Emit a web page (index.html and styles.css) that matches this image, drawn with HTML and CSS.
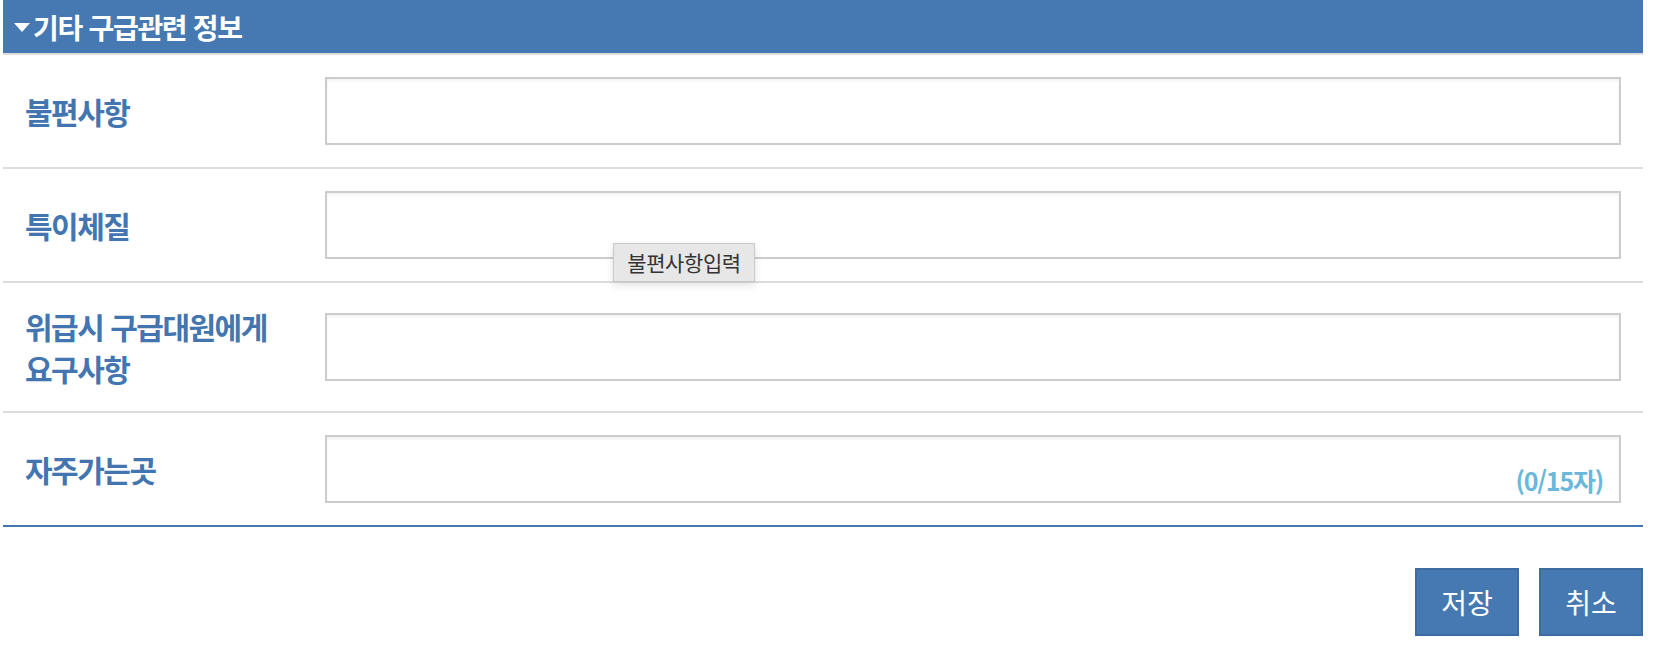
FILE: index.html
```html
<!DOCTYPE html>
<html lang="ko">
<head>
<meta charset="utf-8">
<title>기타 구급관련 정보</title>
<link rel="stylesheet" href="styles.css">
</head>
<body>
<div class="panel">
  <div class="panel-head">
    <span class="caret"></span>
    <h2 class="panel-title">기타 구급관련 정보</h2>
  </div>
  <div class="form">
    <div class="row">
      <div class="label">불편사항</div>
      <div class="field"><div class="input"></div></div>
    </div>
    <div class="row">
      <div class="label">특이체질</div>
      <div class="field"><div class="input"></div></div>
    </div>
    <div class="row">
      <div class="label">위급시 구급대원에게<br>요구사항</div>
      <div class="field"><div class="input"></div></div>
    </div>
    <div class="row row-last">
      <div class="label">자주가는곳</div>
      <div class="field"><div class="input"><span class="count">(0/15자)</span></div></div>
    </div>
  </div>
  <div class="actions">
    <button class="btn">저장</button>
    <button class="btn">취소</button>
  </div>
  <div class="tooltip">불편사항입력</div>
</div>
</body>
</html>
```

FILE: styles.css
```css
html, body {
  margin: 0;
  padding: 0;
  background: #ffffff;
}
body {
  font-family: "Noto Sans CJK KR", "Noto Sans", sans-serif;
}
.panel {
  position: relative;
  width: 1640px;
  margin-left: 3px;
}
.panel-head {
  height: 53px;
  background: #4679b2;
  border-bottom: 2px solid #dcdcdc;
  display: flex;
  align-items: center;
  padding-left: 11px;
}
.caret {
  width: 0;
  height: 0;
  border-left: 8px solid transparent;
  border-right: 8px solid transparent;
  border-top: 9px solid #ffffff;
  margin-right: 3px;
  margin-top: 2px;
}
.panel-title {
  margin: 0;
  color: #ffffff;
  font-size: 28px;
  font-weight: 700;
  letter-spacing: -1.3px;
  line-height: 1;
}
.row {
  display: flex;
  align-items: center;
  padding: 22px 0;
  border-bottom: 2px solid #dcdcdc;
}
.row-last {
  border-bottom: 2px solid #4477b0;
}
.label {
  width: 300px;
  padding-left: 22px;
  color: #4375b0;
  font-size: 30px;
  font-weight: 700;
  letter-spacing: -1.5px;
  line-height: 42px;
}
.field {
  flex: 1;
  padding-right: 22px;
}
.input {
  position: relative;
  height: 68px;
  box-sizing: border-box;
  border: 2px solid #cccccc;
  background: #ffffff;
  box-shadow: inset 0 2px 3px rgba(0, 0, 0, 0.06);
}
.count {
  position: absolute;
  right: 16px;
  bottom: 5px;
  color: #6ab8db;
  font-size: 25px;
  font-weight: 700;
  letter-spacing: -1.2px;
  line-height: 1.3;
}
.actions {
  display: flex;
  justify-content: flex-end;
  gap: 20px;
  padding-top: 41px;
}
.btn {
  width: 104px;
  height: 68px;
  background: #4679b2;
  border: 2px solid #3d6ca3;
  color: #ffffff;
  font-family: "Noto Sans CJK KR", "Noto Sans", sans-serif;
  font-size: 28px;
  font-weight: 400;
  padding: 0;
  cursor: pointer;
}
.tooltip {
  position: absolute;
  left: 610px;
  top: 243px;
  width: 142px;
  height: 39px;
  box-sizing: border-box;
  background: #e7e7e7;
  border: 1px solid #c9c9c9;
  box-shadow: 0 3px 8px rgba(0, 0, 0, 0.12);
  color: #333333;
  font-size: 21px;
  line-height: 37px;
  text-align: center;
  letter-spacing: -0.4px;
}
```
